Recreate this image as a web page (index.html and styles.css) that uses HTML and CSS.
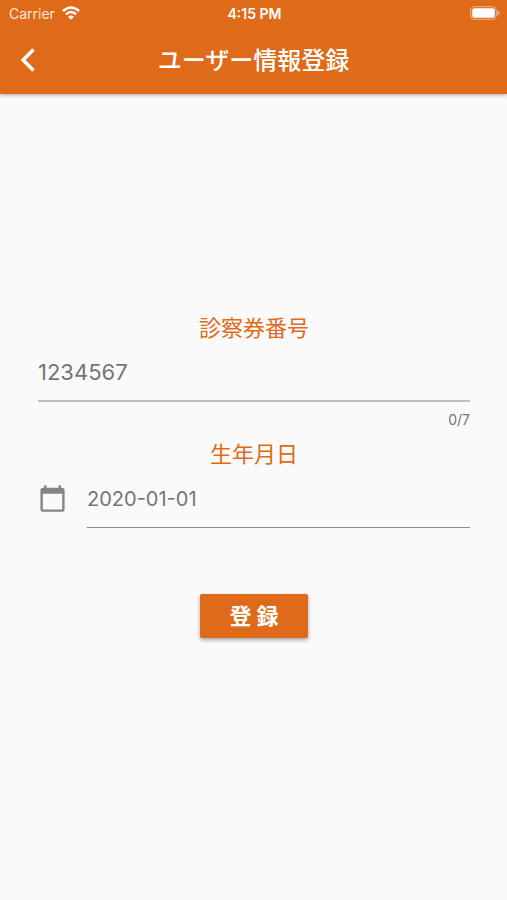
FILE: index.html
```html
<!DOCTYPE html>
<html lang="ja">
<head>
<meta charset="utf-8">
<meta name="viewport" content="width=device-width, initial-scale=1">
<title>ユーザー情報登録</title>
<link rel="stylesheet" href="styles.css">
</head>
<body>
<header class="header">
  <div class="status">
    <div class="carrier">
      <span>Carrier</span>
      <svg class="wifi" viewBox="0 0 18 14" aria-hidden="true">
        <path class="wifi-arc" d="M0.9 5 Q9 -2.200 17.100 5"/>
        <path class="wifi-arc" d="M3.900 8.300 Q9 3.900 14.100 8.300"/>
        <path class="wifi-dot" d="M6 10.700 Q9 8.300 12 10.700 L9 13.700Z"/>
      </svg>
    </div>
    <time class="clock">4:15 PM</time>
    <svg class="battery" viewBox="0 0 30 14" aria-hidden="true">
      <rect class="battery-case" x="0.7" y="0.7" width="25.6" height="12.6" rx="3.6"/>
      <rect class="battery-charge" x="2.2" y="2.2" width="22.6" height="9.6" rx="2"/>
      <path class="battery-tip" d="M27.5 4.6 Q29.5 5.4 29.5 7 Q29.5 8.6 27.5 9.4Z"/>
    </svg>
  </div>
  <div class="bar">
    <button class="back" type="button" aria-label="戻る">
      <svg viewBox="0 0 16 26" aria-hidden="true"><path d="M13.500 2.500 L3 13 L13.500 23.500"/></svg>
    </button>
    <h1 class="title">ユーザー情報登録</h1>
  </div>
</header>
<main class="main">
  <form class="form">
    <label class="label" for="number">診察券番号</label>
    <input class="input" id="number" type="text" inputmode="numeric" maxlength="7" placeholder="1234567">
    <div class="counter">0/7</div>
    <label class="label" for="birthday">生年月日</label>
    <div class="date-row">
      <svg class="calendar" viewBox="0 0 24 24" aria-hidden="true"><path d="M20 3h-1V1h-2v2H7V1H5v2H4c-1.100 0-2 .9-2 2v16c0 1.100.9 2 2 2h16c1.100 0 2-.9 2-2V5c0-1.100-.9-2-2-2zm0 18H4V8h16v13z"/></svg>
      <input class="input input-date" id="birthday" type="text" placeholder="2020-01-01">
    </div>
    <button class="submit" type="submit">登 録</button>
  </form>
</main>
</body>
</html>
```
FILE: styles.css
```css
* {
  box-sizing: border-box;
}

body {
  margin: 0;
  min-height: 100vh;
  display: flex;
  flex-direction: column;
  background: #fafafa;
  color: #757575;
  font-family: Inter, "Noto Sans CJK JP", sans-serif;
}

.header {
  background: #df6a19;
  color: #fff;
  box-shadow: 0 1px 4px rgba(0, 0, 0, 0.35);
}

.status {
  display: grid;
  grid-template-columns: 1fr auto 1fr;
  align-items: center;
  height: 26px;
  padding: 0 7px 0 9px;
  font-size: 14px;
}

.carrier {
  display: flex;
  align-items: center;
  gap: 7px;
  color: #fbe6d6;
}

.wifi {
  width: 18px;
  height: 14px;
}

.wifi-arc {
  fill: none;
  stroke: #fff;
  stroke-width: 2.4;
}

.wifi-dot {
  fill: #fff;
}

.clock {
  font-weight: 600;
}

.battery {
  justify-self: end;
  width: 30px;
  height: 14px;
}

.battery-case {
  fill: none;
  stroke: #efb58c;
  stroke-width: 1;
}

.battery-charge {
  fill: #fff;
}

.battery-tip {
  fill: #efb58c;
}

.bar {
  display: grid;
  grid-template-columns: 56px 1fr 56px;
  align-items: center;
  height: 68px;
}

.back {
  display: flex;
  justify-content: center;
  padding: 0;
  border: 0;
  background: none;
}

.back svg {
  width: 16px;
  height: 26px;
  fill: none;
  stroke: #fff;
  stroke-width: 3.6;
}

.title {
  margin: 0;
  padding-top: 2px;
  text-align: center;
  font-size: 24px;
  font-weight: 500;
  line-height: 32px;
}

.main {
  flex: 1;
  display: flex;
  flex-direction: column;
  justify-content: center;
  padding: 0 37px 42px 38px;
}

.form {
  display: flex;
  flex-direction: column;
}

.label {
  align-self: center;
  color: #df6a19;
  font-size: 22px;
  line-height: 28px;
}

.input {
  width: 100%;
  height: 60px;
  padding: 2px 0 0;
  border: 0;
  border-bottom: 2px solid #bdbdbd;
  border-radius: 0;
  outline: 0;
  background: none;
  color: #212121;
  font: inherit;
  font-size: 22px;
}

.input::placeholder {
  color: #757575;
  opacity: 1;
}

.counter {
  align-self: flex-end;
  margin: 8px 0 10px;
  font-size: 14px;
  line-height: 20px;
}

.date-row {
  display: flex;
  align-items: center;
  gap: 20px;
}

.calendar {
  flex: none;
  width: 29px;
  height: 29px;
  fill: #858585;
}

.input-date {
  flex: 1;
  min-width: 0;
  border-bottom: 1px solid #8e8e8e;
  font-size: 20px;
}

.submit {
  align-self: center;
  width: 108px;
  height: 44px;
  margin-top: 66px;
  padding: 0 0 4px;
  border: 0;
  border-radius: 2px;
  background: #df6a19;
  box-shadow: 0 2px 4px rgba(0, 0, 0, 0.35);
  color: #fff;
  font: inherit;
  font-size: 22px;
  font-weight: 700;
}
```
